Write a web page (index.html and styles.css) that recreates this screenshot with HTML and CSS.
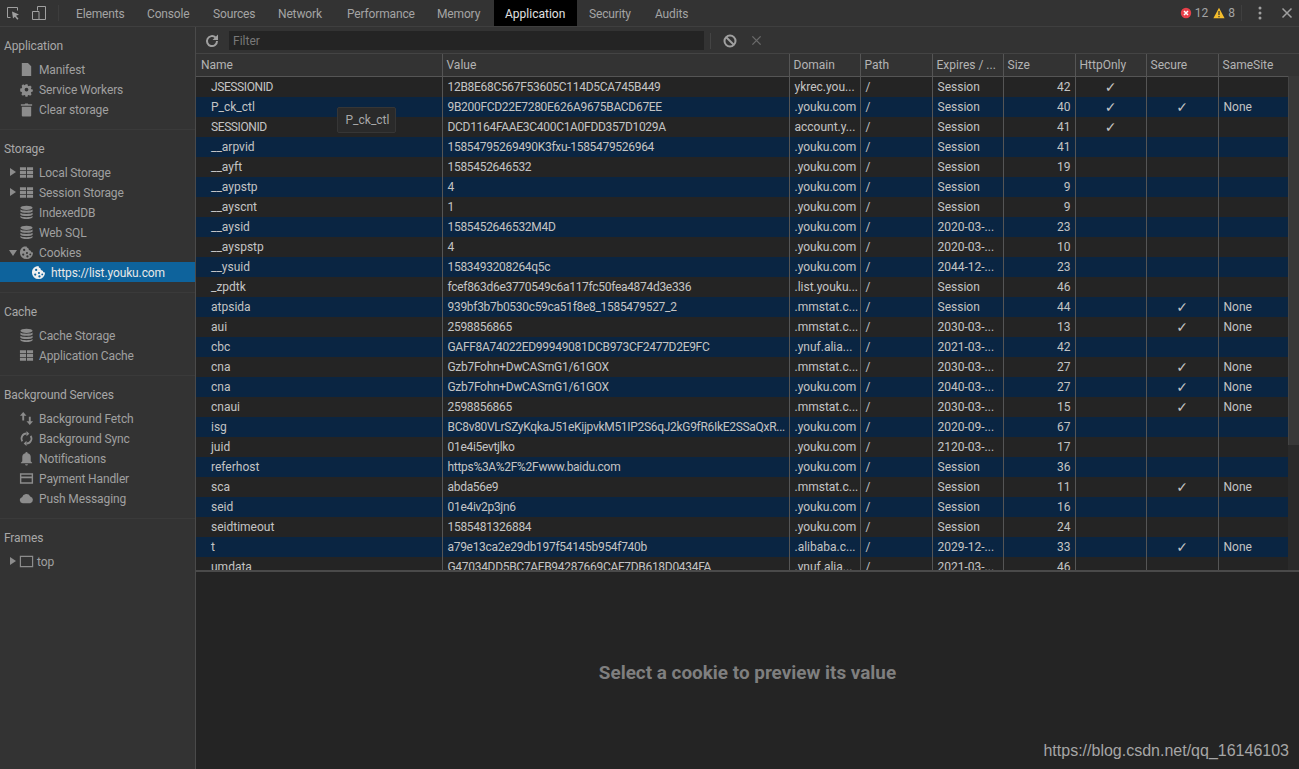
FILE: index.html
```html
<!DOCTYPE html>
<html lang="en">
<head>
<meta charset="utf-8">
<title>DevTools - Application</title>
<link rel="stylesheet" href="styles.css">
</head>
<body>
<div class="devtools">
  <header class="topbar">
    <div class="top-tools">
      <svg class="ti" viewBox="0 0 16 16"><path d="M2.500 2.500h10v3M2.500 2.500v10h3" fill="none" stroke="#a0a0a0" stroke-width="1"/><path d="M7 6.500l7 3-3 1.200 2.500 3-1.200 1-2.400-3L8 13.500z" fill="#a0a0a0"/></svg>
      <svg class="ti" viewBox="0 0 16 16"><path d="M6.500 1.500h8v13h-8M6.500 1.500v4M1.500 6.500h6.500v8h-6.500z" fill="none" stroke="#a0a0a0" stroke-width="1"/></svg>
    </div>
    <nav class="tabs">
      <span class="tab t-el">Elements</span><span class="tab t-co">Console</span><span class="tab t-so">Sources</span><span class="tab t-ne">Network</span><span class="tab t-pe">Performance</span><span class="tab t-me">Memory</span><span class="tab active">Application</span><span class="tab t-se">Security</span><span class="tab t-au">Audits</span>
    </nav>
    <div class="top-right">
      <svg class="st" viewBox="0 0 12 12"><circle cx="6" cy="6" r="5.200" fill="#e8404a"/><path d="M4 4l4 4M8 4l-4 4" stroke="#fff" stroke-width="1.500"/></svg>
      <span class="count c12">12</span>
      <svg class="st" viewBox="0 0 12 12"><path d="M6 .8l5.600 10.400H.4z" fill="#f4bd2c"/><path d="M6 4v4M6 9v1.200" stroke="#333" stroke-width="1.200"/></svg>
      <span class="count">8</span>
      <span class="top-sep"></span>
      <svg class="kebab" viewBox="0 0 4 14"><circle cx="2" cy="2" r="1.500"/><circle cx="2" cy="7" r="1.500"/><circle cx="2" cy="12" r="1.500"/></svg>
      <svg class="close" viewBox="0 0 12 12"><path d="M1.500 1.500l9 9M10.500 1.500l-9 9" stroke="#a0a0a0" stroke-width="1.500"/></svg>
    </div>
  </header>
  <div class="main">
    <aside class="sidebar">
      <section class="sec">
        <h2>Application</h2>
        <div class="item"><svg class="ic" viewBox="0 0 16 16"><path d="M3 1h6.500L13 4.500V15H3z"/></svg>Manifest</div>
        <div class="item"><svg class="ic" viewBox="0 0 16 16"><path d="M6.600 1h2.800l.4 2 1.300.6 1.800-1.100 2 2-1.100 1.800.6 1.300 2 .4v2.800l-2 .4-.6 1.300 1.100 1.800-2 2-1.800-1.100-1.300.6-.4 2H6.600l-.4-2-1.300-.6-1.800 1.100-2-2 1.100-1.800-.6-1.300-2-.4V6.600l2-.4.6-1.300L1.500 3.100l2-2 1.800 1.100 1.300-.6zM8 5.500a2.500 2.500 0 1 0 0 5 2.500 2.500 0 0 0 0-5z" fill-rule="evenodd" transform="translate(1.600 1.600) scale(.8)"/></svg>Service Workers</div>
        <div class="item"><svg class="ic" viewBox="0 0 16 16"><path d="M2 2.500h4l.6-1h2.800l.6 1h4v1.500H2zM3 5h10v9.500a1 1 0 0 1-1 1H4a1 1 0 0 1-1-1z"/></svg>Clear storage</div>
      </section>
      <section class="sec">
        <h2>Storage</h2>
        <div class="item"><i class="tri"></i><svg class="ic" viewBox="0 0 16 16"><use href="#grid"/></svg>Local Storage</div>
        <div class="item"><i class="tri"></i><svg class="ic" viewBox="0 0 16 16"><use href="#grid"/></svg>Session Storage</div>
        <div class="item"><svg class="ic" viewBox="0 0 16 16"><use href="#db"/></svg>IndexedDB</div>
        <div class="item"><svg class="ic" viewBox="0 0 16 16"><use href="#db"/></svg>Web SQL</div>
        <div class="item"><i class="tri open"></i><svg class="ic" viewBox="0 0 16 16"><use href="#cookie"/></svg>Cookies</div>
        <div class="item selected"><svg class="ic" viewBox="0 0 16 16"><use href="#cookie"/></svg>https://list.youku.com</div>
      </section>
      <section class="sec">
        <h2>Cache</h2>
        <div class="item"><svg class="ic" viewBox="0 0 16 16"><use href="#db"/></svg>Cache Storage</div>
        <div class="item"><svg class="ic" viewBox="0 0 16 16"><use href="#grid"/></svg>Application Cache</div>
      </section>
      <section class="sec">
        <h2>Background Services</h2>
        <div class="item"><svg class="ic" viewBox="0 0 16 16"><path d="M4.500 1L8 5H5.500v5h-2V5H1zM11.500 15L8 11h2.500V6h2v5H15z"/></svg>Background Fetch</div>
        <div class="item"><svg class="ic" viewBox="0 0 16 16"><path d="M8 1.500v2.200a4.300 4.300 0 0 0-3.700 6.500L2.900 11.600A6.300 6.300 0 0 1 8 1.700zM8 14.500v-2.200a4.300 4.300 0 0 0 3.700-6.500l1.400-1.400A6.300 6.300 0 0 1 8 14.300z"/><path d="M8 0l3 2.800L8 5.600zM8 16l-3-2.800L8 10.400z"/></svg>Background Sync</div>
        <div class="item"><svg class="ic" viewBox="0 0 16 16"><path d="M8 1a1.200 1.200 0 0 1 1.200 1.300A4.500 4.500 0 0 1 12.500 7v4l1.500 1.500V13H2v-.5L3.500 11V7a4.500 4.500 0 0 1 3.300-4.700A1.200 1.200 0 0 1 8 1zM6.500 14h3a1.500 1.500 0 0 1-3 0z"/></svg>Notifications</div>
        <div class="item"><svg class="ic" viewBox="0 0 16 16"><path d="M1 2.500h14v11H1zM2.500 4v1.800h11V4zM2.500 7.800V12h11V7.800z" fill-rule="evenodd"/></svg>Payment Handler</div>
        <div class="item"><svg class="ic" viewBox="0 0 16 16"><path d="M4 13a3.200 3.200 0 0 1-.7-6.300A4.700 4.700 0 0 1 12 5.800 3.700 3.700 0 0 1 12 13z"/></svg>Push Messaging</div>
      </section>
      <section class="sec last">
        <h2>Frames</h2>
        <div class="item frame-item"><i class="tri"></i><svg class="ic" viewBox="0 0 16 16"><path d="M1.500 2.500h13v11h-13z" fill="none" stroke="#8c8c8c" stroke-width="1.300"/></svg>top</div>
      </section>
    </aside>
    <main class="content">
      <div class="toolbar">
        <svg class="tb-refresh" viewBox="0 0 16 16"><path d="M13 8a5 5 0 1 1-1.500-3.500" fill="none" stroke="#a0a0a0" stroke-width="2"/><path d="M14 1.500V7H8.500z" fill="#a0a0a0"/></svg>
        <div class="filter">Filter</div>
        <span class="tb-sep"></span>
        <svg class="tb-block" viewBox="0 0 14 14"><circle cx="7" cy="7" r="5.500" fill="none" stroke="#a0a0a0" stroke-width="2"/><path d="M3 3l8 8" stroke="#a0a0a0" stroke-width="2"/></svg>
        <svg class="tb-x" viewBox="0 0 12 12"><path d="M1.500 1.500l9 9M10.500 1.500l-9 9" stroke="#6a6a6a" stroke-width="1.500"/></svg>
      </div>
      <div class="grid-wrap">
        <table class="grid">
          <colgroup>
            <col class="c-name"><col class="c-value"><col class="c-domain"><col class="c-path"><col class="c-exp"><col class="c-size"><col class="c-http"><col class="c-sec"><col class="c-same">
          </colgroup>
          <thead>
            <tr><th>Name</th><th>Value</th><th>Domain</th><th>Path</th><th>Expires / ...</th><th>Size</th><th>HttpOnly</th><th>Secure</th><th>SameSite</th></tr>
          </thead>
          <tbody>
            <tr><td class="caps">JSESSIONID</td><td>12B8E68C567F53605C114D5CA745B449</td><td>ykrec.you...</td><td>/</td><td>Session</td><td>42</td><td>✓</td><td></td><td></td></tr>
            <tr><td>P_ck_ctl</td><td>9B200FCD22E7280E626A9675BACD67EE</td><td>.youku.com</td><td>/</td><td>Session</td><td>40</td><td>✓</td><td>✓</td><td>None</td></tr>
            <tr><td class="caps">SESSIONID</td><td>DCD1164FAAE3C400C1A0FDD357D1029A</td><td>account.y...</td><td>/</td><td>Session</td><td>41</td><td>✓</td><td></td><td></td></tr>
            <tr><td>__arpvid</td><td>15854795269490K3fxu-1585479526964</td><td>.youku.com</td><td>/</td><td>Session</td><td>41</td><td></td><td></td><td></td></tr>
            <tr><td>__ayft</td><td>1585452646532</td><td>.youku.com</td><td>/</td><td>Session</td><td>19</td><td></td><td></td><td></td></tr>
            <tr><td>__aypstp</td><td>4</td><td>.youku.com</td><td>/</td><td>Session</td><td>9</td><td></td><td></td><td></td></tr>
            <tr><td>__ayscnt</td><td>1</td><td>.youku.com</td><td>/</td><td>Session</td><td>9</td><td></td><td></td><td></td></tr>
            <tr><td>__aysid</td><td>1585452646532M4D</td><td>.youku.com</td><td>/</td><td>2020-03-...</td><td>23</td><td></td><td></td><td></td></tr>
            <tr><td>__ayspstp</td><td>4</td><td>.youku.com</td><td>/</td><td>2020-03-...</td><td>10</td><td></td><td></td><td></td></tr>
            <tr><td>__ysuid</td><td>1583493208264q5c</td><td>.youku.com</td><td>/</td><td>2044-12-...</td><td>23</td><td></td><td></td><td></td></tr>
            <tr><td>_zpdtk</td><td>fcef863d6e3770549c6a117fc50fea4874d3e336</td><td>.list.youku...</td><td>/</td><td>Session</td><td>46</td><td></td><td></td><td></td></tr>
            <tr><td>atpsida</td><td>939bf3b7b0530c59ca51f8e8_1585479527_2</td><td>.mmstat.c...</td><td>/</td><td>Session</td><td>44</td><td></td><td>✓</td><td>None</td></tr>
            <tr><td>aui</td><td>2598856865</td><td>.mmstat.c...</td><td>/</td><td>2030-03-...</td><td>13</td><td></td><td>✓</td><td>None</td></tr>
            <tr><td>cbc</td><td>GAFF8A74022ED99949081DCB973CF2477D2E9FC</td><td>.ynuf.alia...</td><td>/</td><td>2021-03-...</td><td>42</td><td></td><td></td><td></td></tr>
            <tr><td>cna</td><td>Gzb7Fohn+DwCASrnG1/61GOX</td><td>.mmstat.c...</td><td>/</td><td>2030-03-...</td><td>27</td><td></td><td>✓</td><td>None</td></tr>
            <tr><td>cna</td><td>Gzb7Fohn+DwCASrnG1/61GOX</td><td>.youku.com</td><td>/</td><td>2040-03-...</td><td>27</td><td></td><td>✓</td><td>None</td></tr>
            <tr><td>cnaui</td><td>2598856865</td><td>.mmstat.c...</td><td>/</td><td>2030-03-...</td><td>15</td><td></td><td>✓</td><td>None</td></tr>
            <tr><td>isg</td><td>BC8v80VLrSZyKqkaJ51eKijpvkM51IP2S6qJ2kG9fR6IkE2SSaQxR...</td><td>.youku.com</td><td>/</td><td>2020-09-...</td><td>67</td><td></td><td></td><td></td></tr>
            <tr><td>juid</td><td>01e4i5evtjlko</td><td>.youku.com</td><td>/</td><td>2120-03-...</td><td>17</td><td></td><td></td><td></td></tr>
            <tr><td>referhost</td><td>https%3A%2F%2Fwww.baidu.com</td><td>.youku.com</td><td>/</td><td>Session</td><td>36</td><td></td><td></td><td></td></tr>
            <tr><td>sca</td><td>abda56e9</td><td>.mmstat.c...</td><td>/</td><td>Session</td><td>11</td><td></td><td>✓</td><td>None</td></tr>
            <tr><td>seid</td><td>01e4iv2p3jn6</td><td>.youku.com</td><td>/</td><td>Session</td><td>16</td><td></td><td></td><td></td></tr>
            <tr><td>seidtimeout</td><td>1585481326884</td><td>.youku.com</td><td>/</td><td>Session</td><td>24</td><td></td><td></td><td></td></tr>
            <tr><td>t</td><td>a79e13ca2e29db197f54145b954f740b</td><td>.alibaba.c...</td><td>/</td><td>2029-12-...</td><td>33</td><td></td><td>✓</td><td>None</td></tr>
            <tr><td>umdata</td><td>G47034DD5BC7AFB94287669CAF7DB618D0434FA</td><td>.ynuf.alia...</td><td>/</td><td>2021-03-...</td><td>46</td><td></td><td></td><td></td></tr>
          </tbody>
        </table>
        <div class="tooltip">P_ck_ctl</div>
        <div class="scrollbar"></div>
      </div>
      <div class="preview">Select a cookie to preview its value</div>
    </main>
  </div>
  <div class="watermark">https://blog.csdn.net/qq_16146103</div>
</div>
<svg class="defs" width="0" height="0" aria-hidden="true">
  <defs>
    <symbol id="grid" viewBox="0 0 16 16"><path d="M1 2.500h6.500v3H1zM8.500 2.500H15v3H8.500zM1 6.500h6.500v3H1zM8.500 6.500H15v3H8.500zM1 10.500h6.500v3H1zM8.500 10.500H15v3H8.500z"/></symbol>
    <symbol id="db" viewBox="0 0 16 16"><ellipse cx="8" cy="3" rx="6.500" ry="2.300"/><path d="M1.500 4.800C2.500 6.500 13.500 6.500 14.500 4.800V7C13.500 8.800 2.500 8.800 1.500 7zM1.500 8.300C2.500 10 13.500 10 14.500 8.300V10.500C13.500 12.300 2.500 12.300 1.500 10.500zM1.500 11.800C2.500 13.500 13.500 13.500 14.500 11.800V13C13.500 15.500 2.500 15.500 1.500 13z"/></symbol>
    <symbol id="cookie" viewBox="0 0 16 16"><path fill-rule="evenodd" d="M8 1a7 7 0 1 0 7 7 2.500 2.500 0 0 1-2.500-2 2.500 2.500 0 0 1-2.500-2.500A2.500 2.500 0 0 1 8 1zM5.500 4a1.200 1.200 0 1 0 0 2.400 1.200 1.200 0 0 0 0-2.400zM4.500 9a1.200 1.200 0 1 0 0 2.400 1.200 1.200 0 0 0 0-2.400zM8.500 7.500a1.100 1.100 0 1 0 0 2.200 1.100 1.100 0 0 0 0-2.200zM9 11a1.200 1.200 0 1 0 0 2.400A1.200 1.200 0 0 0 9 11zM12 9a1 1 0 1 0 0 2 1 1 0 0 0 0-2z"/></symbol>
  </defs>
</svg>
</body>
</html>
```

FILE: styles.css
```css
* { box-sizing: border-box; }
html, body { margin: 0; height: 100%; }
body { background: #242424; overflow: hidden; font: 12px/20px Roboto, "Open Sans", sans-serif; color: #a8a8a8; }
.devtools { position: relative; width: 1299px; height: 769px; display: flex; flex-direction: column; }
.defs { position: absolute; }

.topbar { height: 27px; flex: none; display: flex; align-items: stretch; background: #333; border-bottom: 1px solid #3f3f3f; }
.top-tools { width: 59px; display: flex; align-items: center; gap: 10px; padding-left: 5px; border-right: 1px solid #3d3d3d; margin: 5px 0; }
.ti { width: 16px; height: 16px; }
.tabs { display: flex; padding-left: 5px; letter-spacing: -0.15px; }
.tab { height: 26px; line-height: 28px; padding: 0 12px; color: #a4a4a4; }
.t-el { width: 71px; } .t-co { width: 66px; } .t-so { width: 65px; } .t-ne { width: 69px; } .t-pe { width: 90px; } .t-me { width: 69px; }
.tab.active { width: 83px; padding-left: 11px; background: #000; color: #e0e0e0; letter-spacing: 0; }
.t-se { width: 66px; } .t-au { width: 66px; }
.top-right { margin-left: auto; display: flex; align-items: center; padding-right: 6px; }
.st { width: 12px; height: 12px; margin-right: 3px; }
.count { margin-right: 5px; color: #a4a4a4; }
.top-sep { width: 1px; height: 16px; background: #3f3f3f; margin: 0 16px 0 1px; }
.kebab { width: 4px; height: 14px; fill: #a0a0a0; margin-right: 19px; }
.close { width: 12px; height: 12px; }

.main { flex: 1; display: flex; min-height: 0; }
.sidebar { width: 196px; flex: none; background: #333; border-right: 1px solid #4a4a4a; overflow: hidden; letter-spacing: -0.12px; }
.sec { padding-bottom: 10px; border-bottom: 1px solid #3a3a3a; }
.sec.last { border-bottom: 0; }
.sec h2 { margin: 0 0 3px; padding: 9px 0 0 4px; font: inherit; color: #a8a8a8; }
.item { position: relative; height: 20px; display: flex; align-items: center; padding: 2px 0 0 39px; color: #a0a0a0; }
.ic { position: absolute; left: 19px; top: 3px; width: 15px; height: 15px; fill: #8c8c8c; }
.tri { position: absolute; left: 10px; top: 6px; width: 0; height: 0; border-left: 6px solid #8c8c8c; border-top: 4px solid transparent; border-bottom: 4px solid transparent; }
.tri.open { left: 9px; top: 8px; border-left: 4px solid transparent; border-right: 4px solid transparent; border-top: 6px solid #8c8c8c; border-bottom: 0; }
.item.selected { background: #0e639c; color: #e8e8e8; padding-left: 51px; }
.item.selected .ic { left: 31px; fill: #f0f0f0; }
.item.frame-item { padding-left: 37px; }

.content { flex: 1; min-width: 0; display: flex; flex-direction: column; }
.toolbar { height: 27px; flex: none; display: flex; align-items: center; background: #333; border-bottom: 1px solid #444; padding: 1px 0 0 8px; }
.tb-refresh { width: 16px; height: 16px; }
.filter { width: 475px; height: 19px; line-height: 21px; margin-left: 9px; padding-left: 4px; background: #242424; color: #787878; }
.tb-sep { width: 1px; height: 16px; background: #444; margin: 0 12px 0 6px; }
.tb-block { width: 14px; height: 14px; }
.tb-x { width: 11px; height: 11px; margin-left: 14px; }

.grid-wrap { position: relative; height: 518px; flex: none; overflow: hidden; border-bottom: 2px solid #4a4a4a; }
.grid { width: 1103px; table-layout: fixed; border-collapse: collapse; color: #c4c4c4; }
.c-name { width: 246px; } .c-value { width: 347px; } .c-domain { width: 71px; } .c-path { width: 72px; } .c-exp { width: 71px; } .c-size { width: 72px; } .c-http { width: 71px; } .c-sec { width: 72px; } .c-same { width: 81px; }
.grid th { height: 22px; padding: 1px 4px 0; text-align: left; font-weight: 400; color: #b4b4b4; background: #333; border-left: 1px solid #555; border-bottom: 1px solid #555; white-space: nowrap; overflow: hidden; }
.grid th:first-child { border-left: 0; padding-left: 5px; }
.grid td { height: 20px; padding: 0 5px; border-left: 1px solid #555; white-space: nowrap; overflow: hidden; background: #242424; }
.grid td:first-child { border-left: 0; padding-left: 15px; }
.grid td.caps { letter-spacing: -0.4px; }
.grid td:nth-child(2) { letter-spacing: -0.3px; }
.grid tbody tr:nth-child(even) td { background: #0a2542; }
.grid td:nth-child(6) { text-align: right; padding-right: 4px; }
.grid td:nth-child(7), .grid td:nth-child(8) { text-align: center; font-family: "DejaVu Sans", sans-serif; font-size: 14px; }
.tooltip { position: absolute; left: 141px; top: 53px; width: 59px; height: 26px; padding-left: 2px; line-height: 25px; text-align: center; background: #2a2a2a; border: 1px solid #363636; border-radius: 2px; color: #a8a8a8; }
.scrollbar { position: absolute; right: 0; top: 22px; width: 11px; height: 369px; background: #383838; border-left: 1px solid #444; box-shadow: 0 369px 0 #2a2a2a; }

.preview { flex: 1; display: flex; align-items: center; justify-content: center; padding-top: 5px; background: #242424; font: 700 18.9px/24px Roboto, sans-serif; color: #7f7f7f; }
.watermark { position: absolute; right: 10px; bottom: 8px; font: 16px/20px "Liberation Sans", Arial, sans-serif; color: #a6a6a6; }
```
